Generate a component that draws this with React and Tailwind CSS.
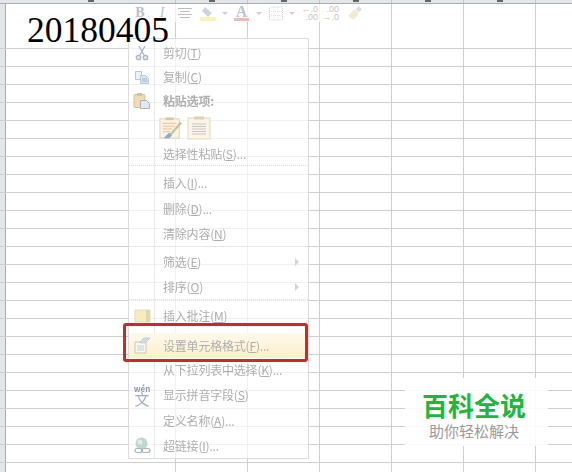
import React from 'react';

const cjk = { fontFamily: '"Noto Sans CJK SC", "Liberation Sans", sans-serif' };
const serif = { fontFamily: '"Liberation Serif", serif' };
const sans = { fontFamily: '"Liberation Sans", sans-serif' };

const columns = ['w-[170px]', 'w-[72px]', 'w-[72px]', 'w-[72px]', 'w-[72px]', 'w-[72px]', 'w-[72px]'];
const rows = Array.from({ length: 24 }, (_, i) => i);

const ScissorsIcon = () => (
  <svg width="16" height="16" viewBox="0 0 16 16" fill="none" stroke="#a9b6c9" strokeWidth="1.3">
    <path d="M5 1l5 9M11 1L6 10" />
    <circle cx="4.500" cy="12.500" r="2.200" fill="#e6ebf2" />
    <circle cx="11.500" cy="12.500" r="2.200" fill="#e6ebf2" />
  </svg>
);

const CopyIcon = () => (
  <svg width="16" height="16" viewBox="0 0 16 16" fill="#eef2f8" stroke="#b8c6d9">
    <path d="M1.500 2.500h6v8h-6z" />
    <path d="M6.500 6.500h5l3 3v5h-8z" fill="#dbe5f0" />
    <path d="M8 10h5M8 12h5" stroke="#a0b3cb" />
  </svg>
);

const PasteIcon = () => (
  <svg width="18" height="18" viewBox="0 0 18 18">
    <rect x="1" y="2.500" width="11" height="13" rx="1" fill="#efdcb4" stroke="#d8c397" />
    <rect x="4" y="1" width="5" height="3" fill="#c9c4b6" />
    <path d="M7.500 8.500h6l3 3v5h-9z" fill="#e3e9f0" stroke="#a6b2c1" />
  </svg>
);

const PasteFormatIcon = () => (
  <svg width="24" height="24" viewBox="0 0 26 24">
    <rect x="1" y="2" width="21" height="21" fill="#fbf3e3" stroke="#e3d2b3" />
    <rect x="7" y="0.500" width="9" height="3" fill="#d8c8a8" />
    <path d="M4 7h15M4 10h13M4 13h10M4 16h8" stroke="#e3bd92" />
    <path d="M24 6L11 21" stroke="#c1c69c" strokeWidth="2.500" />
    <path d="M5 23l6-6 3 3-3 3z" fill="#8faacd" />
  </svg>
);

const PasteValueIcon = () => (
  <svg width="24" height="24" viewBox="0 0 24 24">
    <rect x="1" y="2" width="22" height="21" fill="#fbf5e8" stroke="#e6d7bb" />
    <rect x="7" y="0.500" width="10" height="3" fill="#ddd0b5" />
    <path d="M5 8h14M5 10.500h14M5 13h14M5 15.500h14M5 18h14" stroke="#c6c6c6" />
  </svg>
);

const CommentIcon = () => (
  <svg width="17" height="14" viewBox="0 0 17 14">
    <path d="M1 1h15v12H1z" fill="#f5ecc4" stroke="#e6dcae" />
    <path d="M12 1h4v12h-4z" fill="#e4d9a6" />
  </svg>
);

const FormatIcon = () => (
  <svg width="18" height="17" viewBox="0 0 18 17">
    <path d="M2 5h11v11H2z" fill="#f9f9f4" stroke="#c6c6bd" />
    <path d="M4 9h7M4 11h7M4 13h7" stroke="#cfcfc8" />
    <path d="M7 5l4-4h6l-5 5H7z" fill="#d3dce4" stroke="#b8c3ce" strokeWidth="0.700" />
  </svg>
);

const PinyinIcon = () => (
  <div className="flex flex-col items-center text-[#a3aec8]">
    <span className="text-[8px] font-bold leading-[7px] text-[#8d97ae]" style={cjk}>wén</span>
    <span className="text-[15px] leading-[14px]" style={cjk}>文</span>
  </div>
);

const LinkIcon = () => (
  <svg width="17" height="18" viewBox="0 0 17 18">
    <circle cx="7.500" cy="6.500" r="6" fill="#bdd8ce" />
    <circle cx="6" cy="5" r="2.500" fill="#e0eeea" />
    <rect x="1" y="11.500" width="7" height="4" rx="2" fill="none" stroke="#a9b2c0" strokeWidth="1.200" />
    <rect x="8" y="11.500" width="8" height="4" rx="2" fill="none" stroke="#a9b2c0" strokeWidth="1.200" />
  </svg>
);

const menu = [
  { label: '剪切(', key: 'T', tail: ')', icon: <ScissorsIcon />, h: 'h-6' },
  { label: '复制(', key: 'C', tail: ')', icon: <CopyIcon />, h: 'h-6' },
  { label: '粘贴选项:', icon: <PasteIcon />, h: 'h-6', bold: true },
  { paste: true },
  { label: '选择性粘贴(', key: 'S', tail: ')...', h: 'h-6', sep: true, gap: 'mb-[4px]' },
  { label: '插入(', key: 'I', tail: ')...', h: 'h-[26px]' },
  { label: '删除(', key: 'D', tail: ')...', h: 'h-[25px]' },
  { label: '清除内容(', key: 'N', tail: ')', h: 'h-[26px]', sep: true, gap: 'mb-[2px]' },
  { label: '筛选(', key: 'E', tail: ')', h: 'h-[26px]', arrow: true },
  { label: '排序(', key: 'O', tail: ')', h: 'h-[25px]', arrow: true, sep: true, gap: 'mb-[2px]' },
  { label: '插入批注(', key: 'M', tail: ')', icon: <CommentIcon />, h: 'h-[28px]', gap: 'mb-[3px]' },
  { label: '设置单元格格式(', key: 'F', tail: ')...', icon: <FormatIcon />, h: 'h-[25px]', active: true },
  { label: '从下拉列表中选择(', key: 'K', tail: ')...', h: 'h-6' },
  { label: '显示拼音字段(', key: 'S', tail: ')', icon: <PinyinIcon />, h: 'h-[26px]' },
  { label: '定义名称(', key: 'A', tail: ')...', h: 'h-[25px]' },
  { label: '超链接(', key: 'I', tail: ')...', icon: <LinkIcon />, h: 'h-[25px]' },
];

const MenuItem = ({ item }) => {
  if (item.paste) {
    return (
      <div className="flex h-[29px] items-center gap-[4px] pl-[30px]">
        <PasteFormatIcon />
        <PasteValueIcon />
      </div>
    );
  }
  return (
    <div className={`relative flex items-center ${item.h} ${item.gap || ''} ${item.sep ? 'border-b border-dotted border-[#dddddd]' : ''} ${item.active ? 'bg-gradient-to-b from-[#fdf9ec] to-[#fcefcb]' : ''}`}>
      <div className="flex w-[26px] shrink-0 items-center justify-center">{item.icon}</div>
      <div className={`pl-[8px] text-[12px] leading-none tracking-[-0.2px] text-[#adadad] ${item.bold ? 'font-bold text-[#a0a0a0]' : ''}`} style={cjk}>
        {item.label}
        {item.key && <span className="underline">{item.key}</span>}
        {item.tail}
      </div>
      {item.arrow && <div className="absolute right-[9px] h-0 w-0 border-y-[4px] border-l-[4px] border-y-transparent border-l-[#d4d4d4]" />}
    </div>
  );
};

const Caret = () => <div className="h-0 w-0 border-x-[3px] border-t-[3px] border-x-transparent border-t-[#d0d0d0]" />;

// mini toolbar fading out above the menu
const MiniToolbar = () => (
  <div className="absolute left-[131px] top-[4px] flex h-[18px] w-[240px] items-center bg-white/70 text-[#b9bfc8]">
    <div className="flex w-[18px] justify-center text-[14px] font-bold leading-none" style={serif}>B</div>
    <div className="flex w-[26px] justify-center text-[14px] italic leading-none" style={serif}>I</div>
    <div className="flex w-[20px] justify-center">
      <svg width="14" height="12" viewBox="0 0 14 12" stroke="#bdbdbd">
        <path d="M0 1.500h14M2 4.500h10M0 7.500h14M2 10.500h10" />
      </svg>
    </div>
    <div className="flex w-[37px] items-center gap-[6px] pl-[5px]">
      <svg width="16" height="15" viewBox="0 0 16 15">
        <path d="M5 1l7 6-4 4-6-6z" fill="#ced5de" />
        <rect x="0" y="11" width="16" height="4" fill="#f8f4b4" />
      </svg>
      <Caret />
    </div>
    <div className="flex w-[30px] items-center gap-[7px] pl-[2px]">
      <div className="flex w-[15px] flex-col items-center">
        <span className="text-[16px] font-bold leading-[13px] text-[#bcc3cd]" style={serif}>A</span>
        <div className="h-[3px] w-[15px] bg-[#f2b9bc]" />
      </div>
      <Caret />
    </div>
    <div className="flex w-[38px] items-center gap-[6px] pl-[7px]">
      <svg width="14" height="15" viewBox="0 0 14 15" className="shrink-0">
        <path d="M0.500 1h13v13H.5z" fill="none" stroke="#d2d2d2" strokeDasharray="1 1" />
        <path d="M0 5.500h14M0 9.500h14M5 1v13M9 1v13" stroke="#e2e2e2" strokeDasharray="1 1" />
      </svg>
      <Caret />
    </div>
    <div className="flex w-[18px] flex-col items-end text-[9px] leading-[8px] text-[#c5c5c5]" style={sans}>
      <div>←.0</div>
      <div>.00</div>
    </div>
    <div className="flex w-[21px] flex-col items-end text-[9px] leading-[8px] text-[#c5c5c5]" style={sans}>
      <div>.00</div>
      <div>→.0</div>
    </div>
    <svg width="15" height="15" viewBox="0 0 14 14" className="ml-[8px]">
      <path d="M1 9l6-6 4 4-5 6z" fill="#f1ead0" />
      <path d="M8 3l3-3 3 3-3 3z" fill="#dcdfe2" />
    </svg>
  </div>
);

export default function App() {
  return (
    <div className="relative h-[472px] w-[572px] overflow-hidden bg-white">
      {/* sheet */}
      <div className="flex h-1 border-b border-[#a9adb3] bg-[#e3e6e9]">
        <div className="w-[6px] shrink-0" />
        {columns.map((w, i) => (
          <div key={i} className={`${w} flex shrink-0 justify-center border-r border-[#c4c6c9]`}>
            {i < 6 && <div className="h-[2px] w-[6px] bg-[#666666]" />}
          </div>
        ))}
      </div>
      <div className="flex h-[45px] border-b border-[#cfcfcf]">
        <div className="w-[6px] shrink-0 border-r border-[#a9adb3] bg-[#e3e6e9]" />
        {columns.map((w, i) => (
          <div key={i} className={`${w} shrink-0 border-r border-[#cfcfcf]`}>
            {i === 0 && (
              <div className="relative z-10 pl-[21px] pt-[6px] text-[35.5px] leading-[40px] text-black" style={serif}>
                20180405
              </div>
            )}
          </div>
        ))}
      </div>
      {rows.map((r) => (
        <div key={r} className="flex h-[18px] border-b border-[#cfcfcf]">
          <div className="w-[6px] shrink-0 border-r border-[#a9adb3] bg-[#e3e6e9]" />
          {columns.map((w, i) => (
            <div key={i} className={`${w} shrink-0 border-r border-[#cfcfcf]`} />
          ))}
        </div>
      ))}

      <MiniToolbar />

      {/* context menu */}
      <div className="absolute left-[128px] top-[38px] flex h-[421px] w-[181px] flex-col border border-[#dcdcdc] bg-white/70 pt-[2px] blur-[0.3px]">
        <div className="absolute bottom-0 left-[25px] top-0 w-px bg-[#e9e9e9]" />
        {menu.map((item, i) => (
          <MenuItem key={i} item={item} />
        ))}
      </div>

      {/* red highlight box */}
      <div className="absolute left-[123px] top-[323px] h-[39px] w-[185px] rounded-[3px] border-[3px] border-[#cb2b27]" />

      {/* watermark */}
      <div className="absolute left-[405px] top-[378px] flex h-[68px] w-[143px] flex-col items-center bg-white/90 pr-[5px] pt-[11px]" style={cjk}>
        <div className="text-[26px] font-bold leading-[32px] text-[#1cb83c]">百科全说</div>
        <div className="text-[15px] leading-[20px] text-[#9a9a9a]">助你轻松解决</div>
      </div>
    </div>
  );
}
